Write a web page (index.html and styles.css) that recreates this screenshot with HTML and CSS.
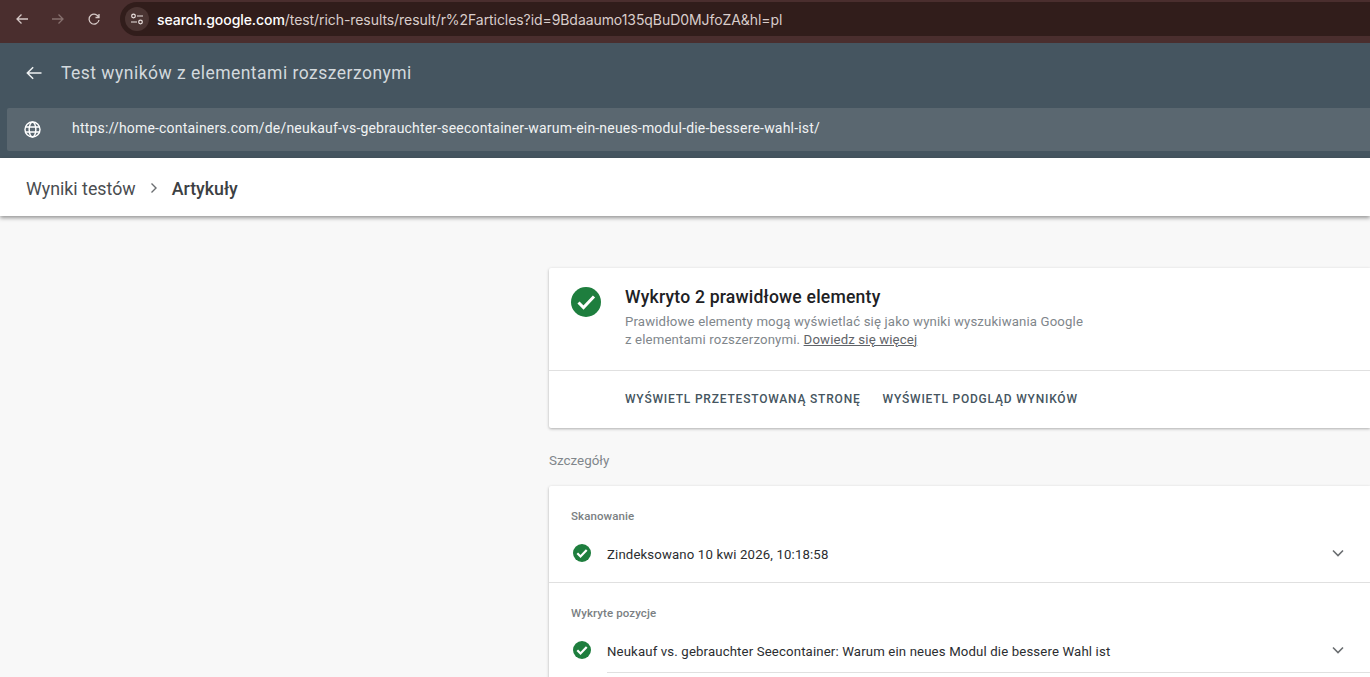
FILE: index.html
```html
<!DOCTYPE html>
<html lang="pl">
<head>
    <meta charset="UTF-8">
    <title>Test wyników z elementami rozszerzonymi</title>
    <link rel="stylesheet" href="styles.css">
</head>
<body>
    <div class="browser">
        <svg class="nav-icon" viewBox="0 0 16 16"><path d="M14 8H3M7.500 3.500 3 8l4.500 4.500"/></svg>
        <svg class="nav-icon dim" viewBox="0 0 16 16"><path d="M2 8h11M8.500 3.500 13 8l-4.500 4.500"/></svg>
        <svg class="nav-icon" viewBox="0 0 16 16"><path d="M12.800 6.500A5 5 0 1 0 13 9M13 3v3.500H9.500"/></svg>
        <div class="omnibox">
            <span class="site-info">
                <svg viewBox="0 0 16 16"><path d="M8 5h6M2 11h6"/><circle cx="4.500" cy="5" r="1.800"/><circle cx="11.500" cy="11" r="1.800"/></svg>
            </span>
            <span class="url"><b>search.google.com</b>/test/rich-results/result/r%2Farticles?id=9Bdaaumo135qBuD0MJfoZA&amp;hl=pl</span>
        </div>
    </div>

    <header class="app-header">
        <div class="title-row">
            <svg class="back" viewBox="0 0 24 24"><path d="M21 12H4M11 5 4 12l7 7"/></svg>
            <span>Test wyników z elementami rozszerzonymi</span>
        </div>
        <div class="test-url">
            <svg class="globe" viewBox="0 0 24 24"><circle cx="12" cy="12" r="9.500"/><ellipse cx="12" cy="12" rx="4.200" ry="9.500"/><path d="M3 8.800h18M3 15.200h18"/></svg>
            <span>https://home-containers.com/de/neukauf-vs-gebrauchter-seecontainer-warum-ein-neues-modul-die-bessere-wahl-ist/</span>
        </div>
    </header>

    <nav class="crumbs">
        <span>Wyniki testów</span>
        <svg viewBox="0 0 12 12"><path d="M3.500 1.500 8 6l-4.500 4.500"/></svg>
        <strong>Artykuły</strong>
    </nav>

    <main class="content">
        <section class="card summary">
            <div class="summary-top">
                <svg class="check big" viewBox="0 0 30 30"><circle cx="15" cy="15" r="15"/><path d="m7.500 15.500 5 5 10.500-11"/></svg>
                <div>
                    <h1>Wykryto 2 prawidłowe elementy</h1>
                    <p>Prawidłowe elementy mogą wyświetlać się jako wyniki wyszukiwania Google<br>z elementami rozszerzonymi. <a href="#">Dowiedz się więcej</a></p>
                </div>
            </div>
            <div class="actions">
                <a href="#">Wyświetl przetestowaną stronę</a>
                <a href="#">Wyświetl podgląd wyników</a>
            </div>
        </section>

        <h2 class="section-label">Szczegóły</h2>

        <section class="card details">
            <div class="group">
                <h3>Skanowanie</h3>
                <div class="row">
                    <svg class="check" viewBox="0 0 18 18"><circle cx="9" cy="9" r="9"/><path d="m4.300 9.300 3.200 3.200 6.200-6.500"/></svg>
                    <span class="row-text">Zindeksowano 10 kwi 2026, 10:18:58</span>
                    <svg class="chevron" viewBox="0 0 12 8"><path d="m1 1.500 5 5 5-5"/></svg>
                </div>
            </div>
            <div class="group">
                <h3>Wykryte pozycje</h3>
                <div class="row">
                    <svg class="check" viewBox="0 0 18 18"><circle cx="9" cy="9" r="9"/><path d="m4.300 9.300 3.200 3.200 6.200-6.500"/></svg>
                    <span class="row-text">Neukauf vs. gebrauchter Seecontainer: Warum ein neues Modul die bessere Wahl ist</span>
                    <svg class="chevron" viewBox="0 0 12 8"><path d="m1 1.500 5 5 5-5"/></svg>
                </div>
                <div class="row-line"></div>
            </div>
        </section>
    </main>
</body>
</html>
```

FILE: styles.css
```css
* {
    margin: 0;
    padding: 0;
    box-sizing: border-box;
}
html, body {
    height: 100%;
    overflow: hidden;
}
body {
    background: #f8f8f8;
    color: #202124;
    font-family: Roboto, "Liberation Sans", sans-serif;
}
svg {
    display: block;
    flex: none;
    fill: none;
}

/* browser toolbar */
.browser {
    height: 43px;
    background: #4a2e2e;
    display: flex;
    align-items: center;
    padding: 2px 0 7px 14px;
}
.nav-icon {
    width: 16px;
    height: 16px;
    margin-right: 20px;
    stroke: #d5c8c6;
    stroke-width: 1.300;
}
.nav-icon.dim {
    stroke: #86706e;
}
.omnibox {
    height: 34px;
    width: 1250px;
    margin-left: -2px;
    flex: none;
    border-radius: 17px 0 0 17px;
    background: #311d1b;
    display: flex;
    align-items: center;
    padding-left: 5px;
}
.site-info {
    width: 24px;
    height: 24px;
    border-radius: 50%;
    background: #4a3432;
    display: flex;
    align-items: center;
    justify-content: center;
    margin-right: 8px;
}
.site-info svg {
    width: 16px;
    height: 16px;
    stroke: #ece3e1;
    stroke-width: 1.200;
}
.url {
    font: 14px "Inter", Roboto, sans-serif;
    letter-spacing: -0.07px;
    color: #d9cdcb;
    white-space: nowrap;
}
.url b {
    font-weight: 500;
    color: #fff;
}

/* app header */
.app-header {
    height: 115px;
    background: #455560;
    padding: 0 0 7px 7px;
    display: flex;
    flex-direction: column;
}
.title-row {
    height: 65px;
    display: flex;
    align-items: center;
    padding: 0 0 6px 17px;
    color: #d3d9dd;
    font-size: 17.500px;
    letter-spacing: 0.48px;
}
.back {
    width: 20px;
    height: 20px;
    margin-right: 17px;
    stroke: #eef1f2;
    stroke-width: 1.800;
}
.test-url {
    flex: 1;
    background: #5a6770;
    border-radius: 2px 0 0 2px;
    display: flex;
    align-items: center;
    padding: 0 0 4px 16px;
    color: #f1f3f4;
    font-size: 14px;
    letter-spacing: 0.19px;
}
.globe {
    width: 19px;
    height: 19px;
    margin: 3px 30px 0 0;
    stroke: #fff;
    stroke-width: 1.800;
}

/* breadcrumbs */
.crumbs {
    height: 58px;
    background: #fff;
    display: flex;
    align-items: center;
    padding: 2px 0 0 26px;
    font-size: 17.800px;
    color: #4a4d50;
    box-shadow: 0 2px 4px rgba(0, 0, 0, 0.4);
    position: relative;
}
.crumbs svg {
    width: 12px;
    height: 12px;
    margin: 0 12px;
    stroke: #6b6e71;
    stroke-width: 1.400;
}
.crumbs strong {
    font-weight: 500;
    color: #3c4043;
}

/* content */
.content {
    margin-left: 549px;
    padding-top: 52px;
}
.card {
    background: #fff;
    box-shadow: 0 1px 3px rgba(0, 0, 0, 0.3);
    border-radius: 2px 0 0 2px;
}
.summary-top {
    height: 103px;
    display: flex;
    padding: 19px 0 0 22px;
    border-bottom: 1px solid #e0e0e0;
}
.check circle {
    fill: #1e7e3e;
}
.check path {
    stroke: #fff;
    stroke-width: 2.200;
}
.check.big {
    width: 30px;
    height: 30px;
    margin-right: 24px;
}
.check.big path {
    stroke-width: 3;
}
h1 {
    font-size: 17.600px;
    font-weight: 500;
    line-height: 20px;
    letter-spacing: 0.2px;
    margin-bottom: 6px;
    color: #202124;
}
.summary p {
    font-size: 13.200px;
    line-height: 17.500px;
    letter-spacing: 0.15px;
    color: #80868b;
}
.summary p a {
    color: #5f6368;
}
.actions {
    height: 57px;
    display: flex;
    align-items: center;
    gap: 22px;
    padding: 0 0 2px 76px;
}
.actions a {
    font-size: 12px;
    font-weight: 500;
    letter-spacing: 0.8px;
    text-transform: uppercase;
    text-decoration: none;
    color: #455560;
}
.section-label {
    height: 58px;
    font-size: 13.400px;
    font-weight: 400;
    line-height: 65px;
    color: #80868b;
}
.group {
    height: 97px;
    padding: 24px 0 0 22px;
    border-bottom: 1px solid #e0e0e0;
}
.group:last-child {
    border-bottom: 0;
}
h3 {
    font-size: 11.500px;
    font-weight: 500;
    line-height: 13px;
    color: #7b7f83;
    letter-spacing: 0.1px;
}
.row {
    display: flex;
    align-items: center;
    height: 30px;
    margin-top: 16px;
    padding-right: 26px;
}
.row .check {
    width: 18px;
    height: 18px;
    margin: -2px 16px 0 2px;
}
.row-text {
    flex: 1;
    font-size: 13.200px;
    letter-spacing: 0.145px;
    color: #2b2d30;
}
.chevron {
    width: 12px;
    height: 8px;
    margin-top: -2px;
    stroke: #6b6e71;
    stroke-width: 1.600;
}
.row-line {
    height: 1px;
    margin: 6px 0 0 36px;
    background: #e0e0e0;
}
```
